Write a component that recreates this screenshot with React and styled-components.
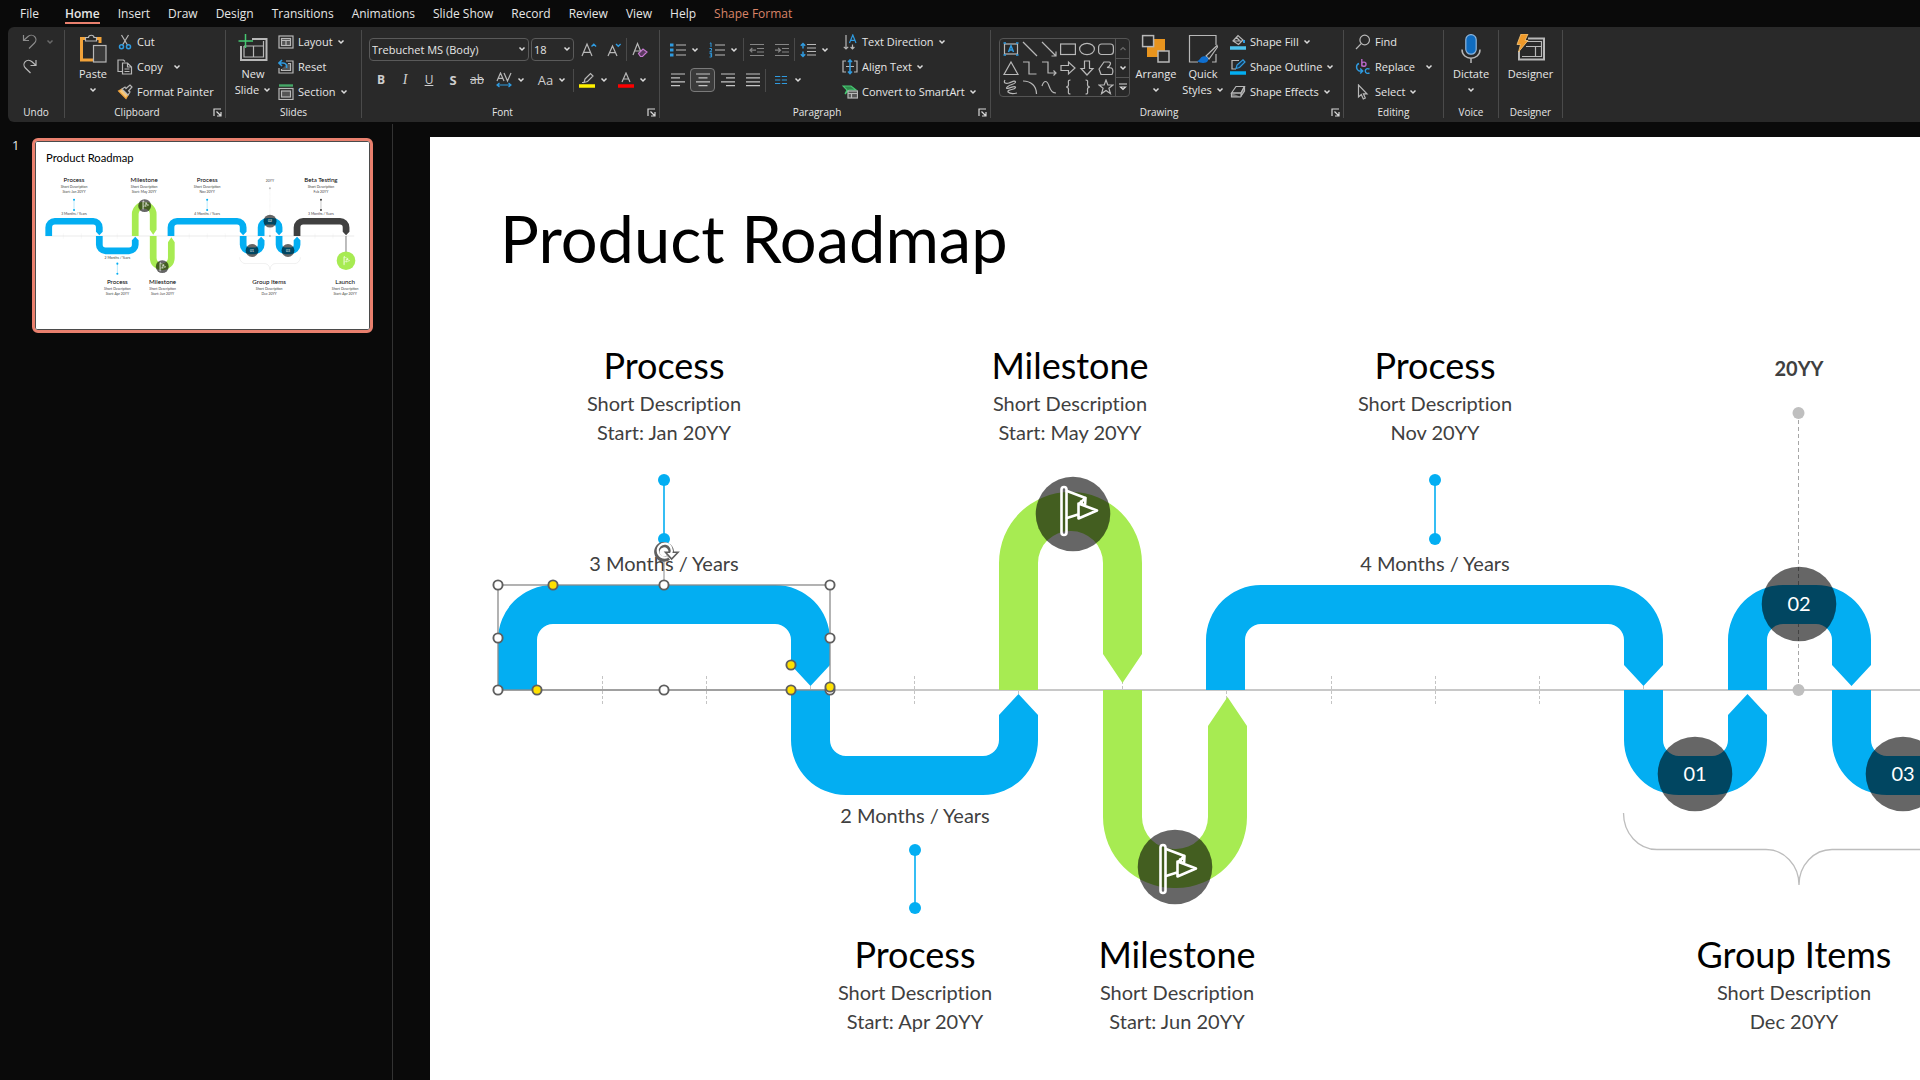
import React from "react";
import styled, { createGlobalStyle } from "styled-components";

const colors = {
  blue: "#03aef2",
  green: "#a7eb52",
  dark: "#404040",
  accent: "#e9806e",
  ink: "#b8b8b8",
  sky: "#2f9be0",
};

const SLIDE = { width: 1956, height: 1100, baseline: 553 };

const GlobalStyle = createGlobalStyle`
  * {
    box-sizing: border-box;
  }

  body {
    margin: 0;
    background: #0a0a0a;
    color: #e6e6e6;
    font-family: "Open Sans", "Noto Sans", sans-serif;
    font-size: 11px;
    overflow: hidden;
  }

  button,
  select {
    font: inherit;
    color: inherit;
    background: none;
    border: none;
    padding: 0;
    margin: 0;
  }
`;

const Page = styled.div`
  display: flex;
  flex-direction: column;
  height: 100vh;
`;

/* ---------- Menu ---------- */

const MenuBar = styled.nav`
  display: flex;
  gap: 18px;
  height: 27px;
  padding-left: 20px;

  a:first-child {
    margin-right: 8px;
  }
`;

const MenuLink = styled.a`
  height: 24px;
  line-height: 27px;
  font-size: 12px;
  text-decoration: none;
  white-space: nowrap;
  color: ${({ $accent }) => ($accent ? "#d98468" : "#e6e6e6")};
  font-weight: ${({ $active }) => ($active ? 600 : 400)};
  border-bottom: 2px solid ${({ $active }) => ($active ? colors.accent : "transparent")};
`;

/* ---------- Ribbon ---------- */

const Ribbon = styled.header`
  display: flex;
  height: 95px;
  flex: none;
  margin-left: 8px;
  padding-top: 3px;
  background: #292929;
  border-radius: 6px 0 0 6px;
`;

const Group = styled.section`
  display: flex;
  flex-direction: column;
  flex: none;
  width: ${({ $width }) => $width}px;
  height: 88px;
  border-right: 1px solid #4a4a4a;
`;

const GroupBody = styled.div`
  display: flex;
  height: 76px;
  padding-left: ${({ $pad }) => $pad || 0}px;
`;

const GroupFooter = styled.div`
  display: grid;
  grid-template-columns: ${({ $launcher }) => ($launcher ? "1fr 16px" : "1fr")};
  height: 12px;
  line-height: 12px;
  font-size: 10px;
  text-align: center;
`;

const Launcher = styled.button`
  display: flex;
  align-items: center;
  justify-content: center;
`;

const BigButton = styled.button`
  display: flex;
  flex-direction: column;
  align-items: center;
  width: ${({ $width }) => $width}px;
  padding-top: 4px;
  line-height: 16px;
  white-space: nowrap;

  > svg:first-child {
    margin-bottom: 2px;
  }
`;

const ButtonLine = styled.span`
  display: flex;
  align-items: center;
  justify-content: center;
  gap: 4px;
  height: 16px;
`;

const SmallColumn = styled.div`
  display: flex;
  flex-direction: column;
  align-items: flex-start;
  margin-left: ${({ $left }) => $left || 0}px;
`;

const SmallButton = styled.button`
  display: flex;
  align-items: center;
  gap: 4px;
  height: 25px;
  line-height: 14px;
  padding-bottom: 1px;
  white-space: nowrap;

  > span {
    margin-right: ${({ $wide }) => ($wide ? 6 : 0)}px;
  }
`;

const ToolRows = styled.div`
  display: flex;
  flex-direction: column;
  gap: 7px;
  padding-top: 8px;
`;

const ToolRow = styled.div`
  display: flex;
  align-items: center;
  height: ${({ $tall }) => ($tall ? 24 : 23)}px;
`;

const Tool = styled.button`
  display: flex;
  align-items: center;
  justify-content: center;
  gap: 5px;
  width: ${({ $width }) => $width || 25}px;
  height: 24px;
  border-radius: 4px;
  border: 1px solid ${({ $on }) => ($on ? "#7a7a7a" : "transparent")};
  background: ${({ $on }) => ($on ? "#3a3a3a" : "none")};
`;

const Glyph = styled.span`
  font-size: ${({ $size }) => $size || 12}px;
  line-height: 20px;
  color: #cfcfcf;
  font-weight: ${({ $bold }) => ($bold ? 700 : 400)};
  font-style: ${({ $italic }) => ($italic ? "italic" : "normal")};
  font-family: ${({ $serif }) => ($serif ? '"Liberation Serif", serif' : "inherit")};
  text-decoration: ${({ $line }) => $line || "none"};
`;

const Divider = styled.span`
  width: 1px;
  height: 23px;
  background: #4a4a4a;
`;

const SelectBox = styled.label`
  position: relative;
  width: ${({ $width }) => $width}px;
  height: 23px;
  margin-right: 2px;

  select {
    appearance: none;
    width: 100%;
    height: 23px;
    padding-left: 2px;
    border: 1px solid #5a5a5a;
    border-radius: 4px;
    outline: none;
  }

  svg {
    position: absolute;
    right: 3px;
    top: 8px;
    pointer-events: none;
  }
`;

const Gallery = styled.div`
  display: flex;
  height: 59px;
  margin-top: 8px;
  border: 1px solid #555;
  border-radius: 4px;
`;

const ShapeGrid = styled.div`
  display: grid;
  grid-template-columns: repeat(6, 19px);
  grid-template-rows: repeat(3, 19px);
  padding-left: 1px;

  button {
    display: flex;
    align-items: center;
    justify-content: center;
  }
`;

const GalleryScroll = styled.div`
  display: grid;
  grid-template-rows: repeat(3, 19px);
  width: 14px;
  border-left: 1px solid #555;

  button {
    display: flex;
    align-items: center;
    justify-content: center;
  }

  button + button {
    border-top: 1px solid #555;
  }
`;

/* ---------- Workspace ---------- */

const Workspace = styled.div`
  display: flex;
  flex: 1;
  min-height: 0;
  padding-top: 2px;
`;

const SlidePanel = styled.aside`
  display: flex;
  align-items: flex-start;
  flex: none;
  width: 393px;
  padding: 14px 0 0 12px;
  border-right: 1px solid #333;
`;

const SlideNumber = styled.span`
  width: 20px;
  font-size: 13px;
  line-height: 14px;
`;

const Thumbnail = styled.button`
  display: block;
  width: 341px;
  height: 195px;
  padding: 0;
  border: 3px solid ${colors.accent};
  border-radius: 6px;
  background: #fff;
  overflow: hidden;

  svg {
    display: block;
    width: 100%;
    height: 100%;
    outline: 1px solid #4b4b4b;
    outline-offset: -1px;
    border-radius: 2px;
  }
`;

const Stage = styled.main`
  flex: 1;
  min-width: 0;
  padding: 13px 0 0 37px;
  overflow: hidden;
`;

const SlideCanvas = styled.div`
  position: relative;
  width: ${SLIDE.width}px;
  height: ${SLIDE.height}px;
  background: #fff;
  color: #000;
  font-family: Lato, "Open Sans", sans-serif;
  font-variant-ligatures: none;

  > svg {
    display: block;
  }
`;

const SlideTitle = styled.h1`
  position: absolute;
  left: 70px;
  top: 62px;
  margin: 0;
  font-size: 65px;
  line-height: 78px;
  font-weight: 400;
  white-space: nowrap;
`;

const Label = styled.div`
  position: absolute;
  left: ${({ $x }) => $x - 150}px;
  top: ${({ $y }) => $y}px;
  width: 300px;
  text-align: center;
  font-size: 20px;
  line-height: 29px;
  color: ${({ $color }) => $color || colors.dark};
  font-weight: ${({ $bold }) => ($bold ? 700 : 400)};

  h2 {
    margin: 0;
    font-size: 36px;
    line-height: 48px;
    font-weight: 400;
    color: #000;
  }

  p {
    margin: 0;
  }
`;

const SelectionLayer = styled.svg`
  position: absolute;
  left: 0;
  top: 0;
`;

/* ---------- Roadmap data, in slide coordinates ---------- */

const bend = { ro: 55, ri: 16, shoulder: 25, tip: 4, h: 105 };
const loop = { ro: 71, ri: 32, shoulder: 36, tip: 7, h: 198 };

const bands = [
  { x: 68, w: 332, dir: 1, color: colors.blue, ...bend },
  { x: 361, w: 247, dir: -1, color: colors.blue, ...bend },
  { x: 569, w: 143, dir: 1, color: colors.green, ...loop },
  { x: 673, w: 144, dir: -1, color: colors.green, ...loop },
  { x: 776, w: 457, dir: 1, color: colors.blue, ...bend },
  { x: 1194, w: 143, dir: -1, color: colors.blue, ...bend },
  { x: 1298, w: 143, dir: 1, color: colors.blue, ...bend },
  { x: 1402, w: 143, dir: -1, color: colors.blue, ...bend },
  { x: 1506, w: 323, dir: 1, color: colors.dark, ...bend },
];

const connectors = [
  { x: 234, y1: 343, y2: 402, color: colors.blue },
  { x: 485, y1: 713, y2: 771, color: colors.blue },
  { x: 1005, y1: 343, y2: 402, color: colors.blue },
  { x: 1664, y1: 343, y2: 402, color: colors.dark },
];

const ticks = [172, 276, 380, 484, 588, 692, 796, 901, 1005, 1109, 1213, 1525, 1629, 1733];

// far: beyond the right edge of the zoomed-in slide, drawn in the overview only
const captions = [
  { x: 234, y: 204, title: "Process", lines: ["Short Description", "Start: Jan 20YY"] },
  { x: 640, y: 204, title: "Milestone", lines: ["Short Description", "Start: May 20YY"] },
  { x: 1005, y: 204, title: "Process", lines: ["Short Description", "Nov 20YY"] },
  { x: 1664, y: 204, title: "Beta Testing", lines: ["Short Description", "Feb 20YY"], far: true },
  { x: 485, y: 793, title: "Process", lines: ["Short Description", "Start: Apr 20YY"] },
  { x: 747, y: 793, title: "Milestone", lines: ["Short Description", "Start: Jun 20YY"] },
  { x: 1364, y: 793, title: "Group Items", lines: ["Short Description", "Dec 20YY"] },
  { x: 1804, y: 793, title: "Launch", lines: ["Short Description", "Start: Apr 20YY"], far: true },
];

const notes = [
  { x: 234, y: 412, text: "3 Months / Years" },
  { x: 485, y: 664, text: "2 Months / Years" },
  { x: 1005, y: 412, text: "4 Months / Years" },
  { x: 1664, y: 412, text: "3 Months / Years", far: true },
  { x: 1369, y: 217, text: "20YY", bold: true },
  { x: 1265, y: 622, text: "01", color: "#fff" },
  { x: 1369, y: 452, text: "02", color: "#fff" },
  { x: 1473, y: 622, text: "03", color: "#fff" },
];

const badges = [
  [643, 377],
  [745, 730],
  [1265, 637],
  [1369, 467],
  [1473, 637],
];

const bandPath = ({ x, w, h, dir, ro, ri, shoulder, tip }) => {
  const t = 39;
  const base = SLIDE.baseline;
  const y = (d) => base - dir * d;
  const out = dir === 1 ? 1 : 0;
  const inn = 1 - out;
  const r = x + w;
  return [
    `M${x} ${base}V${y(h - ro)}`,
    `A${ro} ${ro} 0 0 ${out} ${x + ro} ${y(h)}H${r - ro}`,
    `A${ro} ${ro} 0 0 ${out} ${r} ${y(h - ro)}V${y(shoulder)}`,
    `L${r - t / 2} ${y(tip)}L${r - t} ${y(shoulder)}V${y(h - t - ri)}`,
    `A${ri} ${ri} 0 0 ${inn} ${r - t - ri} ${y(h - t)}H${x + t + ri}`,
    `A${ri} ${ri} 0 0 ${inn} ${x + t} ${y(h - t - ri)}V${base}Z`,
  ].join("");
};

const Flag = ({ x, y }) => (
  <g
    transform={`translate(${x} ${y})`}
    fill="none"
    stroke="#fff"
    strokeWidth="2.6"
    strokeLinejoin="round"
    strokeLinecap="round"
  >
    <rect x="-11.5" y="-27" width="5" height="48" rx="2.5" />
    <path d="M-6-23L12.5-16L12-8M-6 4L5 0.5M12.5-16L6-10M5.5-10.5L24-3.5L5.5 4.5ZM8-12.5L10-9" />
  </g>
);

const RoadmapArt = () => (
  <>
    <path d="M68 553H1857" stroke="#c8c8c8" strokeWidth="2" />
    {ticks.map((x) => (
      <path key={x} d={`M${x + 0.5} 539V567`} stroke="#c4c4c4" strokeDasharray="3 2" />
    ))}
    <path d="M1368.5 276V553" stroke="#a6a6a6" strokeDasharray="4 3" />
    {bands.map((band) => (
      <path key={band.x} d={bandPath(band)} fill={band.color} />
    ))}
    <circle cx="1368.5" cy="276" r="6" fill="#bfbfbf" />
    <circle cx="1368.5" cy="553" r="6" fill="#bfbfbf" />
    {connectors.map(({ x, y1, y2, color }) => (
      <g key={x} fill={color}>
        <path d={`M${x} ${y1}V${y2}`} stroke={color} strokeWidth="1.6" />
        <circle cx={x} cy={y1} r="6" />
        <circle cx={x} cy={y2} r="6" />
      </g>
    ))}
    {badges.map(([x, y]) => (
      <circle key={x} cx={x} cy={y} r="37.3" fill="#000" fillOpacity="0.6" />
    ))}
    <Flag x={643} y={377} />
    <Flag x={742} y={735} />
    <path
      d="M1193.5 676C1193.5 696 1208 712.5 1227 712.5H1336C1354 712.5 1369 728 1369 748C1369 728 1384 712.5 1402 712.5H1511C1530 712.5 1544.5 696 1544.5 676"
      fill="none"
      stroke="#bdbdbd"
      strokeWidth="1.3"
    />
    <path d="M1809 553V650" stroke={colors.dark} strokeWidth="4" />
    <circle cx="1809" cy="696" r="54" fill={colors.green} />
    <Flag x={1807} y={699} />
  </>
);

const handles = [
  [68, 448], [234, 448], [400, 448], [68, 501], [400, 501], [68, 553], [234, 553], [400, 553],
];
const yellowHandles = [[123, 448], [107, 553], [361, 528], [361, 553], [400, 550]];

const Selection = () => (
  <g stroke="#5f5f5f">
    <rect x="68" y="448" width="332" height="105" fill="none" stroke="#8a8a8a" strokeWidth="1.3" />
    <path d="M234 424V448" stroke="#8a8a8a" />
    <g strokeWidth="1.9">
      {handles.map(([x, y]) => (
        <circle key={`${x}-${y}`} cx={x} cy={y} r="4.6" fill="#fff" />
      ))}
      {yellowHandles.map(([x, y]) => (
        <circle key={`${x}-${y}`} cx={x} cy={y} r="4.6" fill="#ffe100" />
      ))}
    </g>
    <path d="M238.4 420.6A7.2 7.2 0 1 1 241.2 415.6" fill="none" strokeWidth="5.4" />
    <path d="M235.5 415.3H248L241.6 422Z" fill="#fff" strokeWidth="1.6" />
    <path d="M237.6 420A7 7 0 1 1 241 416.8" fill="none" stroke="#fff" strokeWidth="2.2" />
  </g>
);

const MainSlide = () => (
  <SlideCanvas>
    <svg width={SLIDE.width} height={SLIDE.height} aria-hidden="true">
      <RoadmapArt />
    </svg>
    <SlideTitle>Product Roadmap</SlideTitle>
    {captions.filter(({ far }) => !far).map(({ x, y, title, lines }) => (
      <Label key={title + x} $x={x} $y={y}>
        <h2>{title}</h2>
        {lines.map((line) => (
          <p key={line}>{line}</p>
        ))}
      </Label>
    ))}
    {notes.filter(({ far }) => !far).map(({ x, y, text, bold, color }) => (
      <Label key={text + x} $x={x} $y={y} $bold={bold} $color={color}>
        {text}
      </Label>
    ))}
    <SelectionLayer width="460" height="600" aria-hidden="true">
      <Selection />
    </SelectionLayer>
  </SlideCanvas>
);

const ThumbSlide = () => (
  <svg viewBox="8 4 1940 1092" fontFamily="Lato, sans-serif" fontSize="20">
    <RoadmapArt />
    <text x="72" y="126" fontSize="65">
      Product Roadmap
    </text>
    {captions.map(({ x, y, title, lines }) => (
      <g key={title + x} textAnchor="middle">
        <text x={x} y={y + 37} fontSize="36">
          {title}
        </text>
        {lines.map((line, i) => (
          <text key={line} x={x} y={y + 70 + i * 29} fill={colors.dark}>
            {line}
          </text>
        ))}
      </g>
    ))}
    {notes.map(({ x, y, text, color }) => (
      <text key={text + x} x={x} y={y + 21} textAnchor="middle" fill={color || colors.dark}>
        {text}
      </text>
    ))}
  </svg>
);

/* ---------- Icons ---------- */

const Icon = ({ size = 16, color = colors.ink, children }) => (
  <svg
    width={size}
    height={size}
    viewBox={`0 0 ${size} ${size}`}
    fill="none"
    stroke={color}
    strokeWidth="1.2"
    aria-hidden="true"
  >
    {children}
  </svg>
);

const Chevron = ({ color = "#dcdcdc" }) => (
  <svg width="8" height="6" viewBox="0 0 8 6" fill="none" stroke={color} strokeWidth="1.5" aria-hidden="true">
    <path d="M1.5 1.5L4 4L6.5 1.5" />
  </svg>
);

const LauncherIcon = () => (
  <svg width="9" height="9" viewBox="0 0 9 9" fill="none" stroke="#d8d8d8" strokeWidth="1.2" aria-hidden="true">
    <path d="M1 8V1H8M3.5 3.5L7.5 7.5M8 4V8H4" />
  </svg>
);

const UndoIcon = () => (
  <Icon color="#8c8c8c">
    <path d="M1.5 1V6.5H7M1.5 6.5L6 2.5C8 .8 11 .8 12.7 2.6C14.4 4.4 14.3 7.2 12.5 9L7 14.5" />
  </Icon>
);

const RedoIcon = () => (
  <Icon>
    <path d="M14 1V6.5H8.5M14 6.5L10 2.7C8 .8 5 .8 3.2 2.6C1.5 4.4 1.6 7.2 3.4 9L8.5 14" />
  </Icon>
);

const PasteIcon = () => (
  <Icon size={30}>
    <path d="M9 4.5H3.5V26H15M19 4.5H22V9" stroke="#f2a33a" strokeWidth="3" />
    <path d="M7.5 7V3.5H10.5C10.5 .5 16 .5 16 3.5H18.5V7Z" fill="#292929" />
    <rect x="15.5" y="11.5" width="12.5" height="16.5" fill="#3a3a3a" />
  </Icon>
);

const CutIcon = () => (
  <Icon>
    <path d="M4.5 1L10.5 11M11.5 1L5.5 11" />
    <circle cx="4.5" cy="12.7" r="2" stroke={colors.sky} strokeWidth="1.5" />
    <circle cx="11.5" cy="12.7" r="2" stroke={colors.sky} strokeWidth="1.5" />
  </Icon>
);

const CopyIcon = () => (
  <Icon>
    <path d="M5.5 12.5H1V1H6.5L8 2.5M5.5 4H10.5L14.5 8V15H5.5ZM10.5 4V8H14.5M7.5 10H12.5M7.5 12.5H12.5" />
  </Icon>
);

const PainterIcon = () => (
  <Icon>
    <path d="M1.5 7L6 4.5L11.5 10L9 14.5Z" fill="#f6c87c" stroke="#f2a33a" />
    <path d="M5 5L8 3L9 4.5L13 1L15 3L11.5 7L13 8L11 11Z" fill="#292929" />
  </Icon>
);

const NewSlideIcon = () => (
  <Icon size={30}>
    <path d="M14 5H28.5V26H3V12" strokeWidth="2" />
    <path d="M6 12H25.5M15.5 12V23M6 12V23H25.5V7" strokeWidth="1.2" />
    <path d="M7.5 0V14M.5 7H15" stroke="#46c872" strokeWidth="1.5" />
  </Icon>
);

const LayoutIcon = () => (
  <Icon>
    <rect x="1" y="2" width="14" height="12" />
    <rect x="3.5" y="4.5" width="9" height="7" fill="#555" />
    <path d="M3.5 6.5H12.5M8 6.5V11.5" />
  </Icon>
);

const ResetIcon = () => (
  <Icon>
    <path d="M8 2H15V14H1V9" />
    <path d="M10 4.5H12.5V11.5H3.5V10" fill="#555" />
    <path d="M4 1L1 4L4 7M1 4H5C8 4 9 6 8.5 9" stroke={colors.sky} strokeWidth="1.6" />
  </Icon>
);

const SectionIcon = () => (
  <Icon>
    <path d="M1 1.5H15" stroke="#46a868" strokeWidth="2.4" />
    <rect x="1" y="4.5" width="14" height="11" />
    <rect x="3.5" y="7" width="9" height="6" fill="#555" />
  </Icon>
);

const GrowIcon = ({ small }) => (
  <Icon>
    <path d={small ? "M2 14L6.5 4L11 14M3.6 10.6H9.4" : "M1 14L6 2L11 14M2.8 10.3H9.2"} />
    <path d={small ? "M10 2L12.3 4.3L14.6 2" : "M10.5 4.5L12.8 2.2L15.1 4.5"} stroke={colors.sky} strokeWidth="1.4" />
  </Icon>
);

const ClearIcon = () => (
  <Icon>
    <path d="M1 13L5.5 1.5L9 10M2.6 9H8" />
    <path d="M6.5 11.5L11 7L15 10L10.5 14.5H8.5Z" stroke="#c678d0" fill="#5b3a60" />
  </Icon>
);

const SpacingIcon = () => (
  <Icon>
    <path d="M1 9L4.5 1L8 9M2.2 6.3H6.8M8 1L11.5 9L15 1" />
    <path d="M1 13H15M3.5 11L1 13L3.5 15M12.5 11L15 13L12.5 15" stroke={colors.sky} />
  </Icon>
);

const HighlighterIcon = () => (
  <Icon>
    <path d="M6 7L11.5 1.5L14 4L8.5 9.5L5 10.5ZM3 10.5H5" />
    <path d="M0 14H16" stroke="#fff100" strokeWidth="3.5" />
  </Icon>
);

const FontColorIcon = () => (
  <Icon>
    <path d="M4 10L8 1L12 10M5.4 7H10.6" />
    <path d="M0 14H16" stroke="#f00" strokeWidth="3.5" />
  </Icon>
);

const BulletsIcon = () => (
  <Icon>
    <path d="M6 3H16M6 8H16M6 13H16" />
    <path d="M0 3H3.5M0 8H3.5M0 13H3.5" stroke={colors.sky} strokeWidth="3.2" />
  </Icon>
);

const NumbersIcon = () => (
  <Icon>
    <path d="M6 3H16M6 8H16M6 13H16" />
    <path d="M.8 1.5L2 .8V5M.5 6.5H2.5V8.3L.7 9.8H3M.5 11.3H2.6V15H.5M1 13H2.6" stroke={colors.sky} strokeWidth="1" />
  </Icon>
);

const IndentIcon = ({ out }) => (
  <Icon color="#858585">
    <path d="M1 2.5H15M8 6.5H15M8 10H15M1 13.5H15" />
    <path d={out ? "M7 8.2H1M3.3 6L1 8.2L3.3 10.4" : "M1 8.2H6.5M4.2 6L6.5 8.2L4.2 10.4"} />
  </Icon>
);

const LineSpacingIcon = () => (
  <Icon>
    <path d="M7 2.5H16M7 6H16M7 9.5H16M7 13H16" />
    <path d="M3 1.5V6.5M3 9.5V14.5M.8 3.8L3 1.5L5.2 3.8M.8 12.2L3 14.5L5.2 12.2" stroke={colors.sky} strokeWidth="1.5" />
  </Icon>
);

const alignLines = {
  left: "M1 2H15M1 5.9H10M1 9.8H15M1 13.7H10",
  center: "M1 2H15M3.5 5.9H12.5M1 9.8H15M3.5 13.7H12.5",
  right: "M1 2H15M6 5.9H15M1 9.8H15M6 13.7H15",
  justify: "M1 2H15M1 5.9H15M1 9.8H15M1 13.7H15",
};

const AlignIcon = ({ kind }) => (
  <Icon color="#c4c4c4">
    <path d={alignLines[kind]} />
  </Icon>
);

const ColumnsIcon = () => (
  <Icon color={colors.sky}>
    <path d="M2 4.5H7.3M2 8H7.3M2 11.5H7.3M8.8 4.5H14M8.8 8H14M8.8 11.5H14" />
  </Icon>
);

const TextDirectionIcon = () => (
  <Icon>
    <path d="M4 1V15M1.8 12.8L4 15L6.2 12.8M10.5 10.5V15M8.6 13L10.5 15L12.4 13" />
    <path d="M7.5 9L10.8 1L14 9M8.5 6.3H13" stroke={colors.sky} />
  </Icon>
);

const AlignTextIcon = () => (
  <Icon>
    <path d="M4 2H1V13H4M12 2H15V13H12M4 7.5H12" />
    <path d="M8 1V14.5M6 3L8 1L10 3M6 12.5L8 14.5L10 12.5" stroke={colors.sky} strokeWidth="1.6" />
  </Icon>
);

const SmartArtIcon = () => (
  <Icon>
    <path d="M1 2H9L14 6H7L3 10L5 6Z" fill="#2f8a4c" stroke="#46c872" />
    <rect x="6" y="7" width="9.5" height="7" fill="#555" />
    <path d="M6 9.5H15.5M9.5 9.5V14" />
  </Icon>
);

const ArrangeIcon = () => (
  <Icon size={30}>
    <rect x="6" y="5" width="18" height="18" fill="#e8941e" stroke="none" />
    <rect x="1.6" y="1.6" width="11" height="11" fill="#292929" strokeWidth="1.5" />
    <rect x="17" y="17" width="11" height="11" fill="#292929" strokeWidth="1.5" />
  </Icon>
);

const QuickStylesIcon = () => (
  <Icon size={30}>
    <path d="M10 28H1.5V1.5H28V11M28 20V28H24" />
    <path d="M29 11.5L18 22L21 25L29.5 13Z" fill="#292929" />
    <path d="M9 27C12 27 12 22.5 16 22.3C19 22.2 21 24.5 20 26.5C18.5 30 12 29.5 9 27Z" fill="#0f6fd0" stroke="none" />
  </Icon>
);

const FillIcon = () => (
  <Icon>
    <path d="M3 7L8 1.5L13 6L8.5 10.5ZM6 3L9.5 6.5M3 7H12" />
    <path d="M14 6V9" stroke={colors.sky} strokeWidth="2" />
    <path d="M0 14H16" stroke="#4fc3ee" strokeWidth="3.5" />
  </Icon>
);

const OutlineIcon = () => (
  <Icon>
    <path d="M9 1.5H2V10H6" />
    <path d="M6 9.5L7 6L13 .8L15 3L9.5 8.5Z" stroke={colors.sky} fill="#123a58" />
    <path d="M0 14H16" stroke={colors.blue} strokeWidth="3.5" />
  </Icon>
);

const EffectsIcon = () => (
  <Icon>
    <path d="M1.5 9L6 2.5H14.5L11 9Z" />
    <path d="M1.5 9V13H10.5L14.5 7V2.5L11 9V13M1.5 9H11" fill="#777" />
  </Icon>
);

const FindIcon = () => (
  <Icon>
    <circle cx="9.7" cy="6" r="4.8" />
    <path d="M6.2 9.6L1 15" />
  </Icon>
);

const ReplaceIcon = () => (
  <Icon>
    <path d="M6.8 0V7.5M6.8 5.2C6.8 2.4 11 2.4 11 5.2C11 8 6.8 8 6.8 5.2" stroke="#b866c8" strokeWidth="1.4" />
    <path d="M14.5 10.2C12.5 9 10.3 10 10.3 12C10.3 14 12.5 15 14.5 13.8M4 4.5C1 5.5 .5 10 4 12H7.5M5.2 9.5L7.7 12L5.2 14.5" stroke={colors.sky} strokeWidth="1.4" />
  </Icon>
);

const CursorIcon = () => (
  <Icon>
    <path d="M3.5 1V13L6.3 10.5L8.3 15L10.3 14L8.4 9.8H12Z" />
  </Icon>
);

const MicIcon = () => (
  <Icon size={30}>
    <rect x="9.8" y=".7" width="10.4" height="19.5" rx="5" fill="#0f6cc0" stroke="#8fb6dc" />
    <path d="M6 15.5C6 27 24 27 24 15.5M15 24V29" strokeWidth="1.5" />
  </Icon>
);

const DesignerIcon = () => (
  <Icon size={30}>
    <path d="M12 4.5H28V25.5H3V17" strokeWidth="2" />
    <path d="M10 7.5H25.5V22.5H6M10 12.5H25.5M19.5 12.5V22.5" />
    <path d="M5 0H12L9 6.5H12L2.5 18L4.5 10.5H1Z" fill="#f09a2a" stroke="#f6c87c" strokeWidth=".8" />
  </Icon>
);

const shapes = [
  ["Text box", <><rect x="1.5" y="3" width="13" height="10" /><path d="M5.5 11L8 4.8L10.5 11M6.3 9H9.7M.5 2H3M13 2H15.5M.5 14H3M13 14H15.5" stroke={colors.sky} strokeWidth="1.5" /></>],
  ["Line", <path d="M1 1L15 15" />],
  ["Arrow", <path d="M1 1L15 15M15 10.5V15H10.5" />],
  ["Rectangle", <rect x=".6" y="3" width="14.8" height="10.5" />],
  ["Oval", <ellipse cx="8" cy="8" rx="7.4" ry="5.6" />],
  ["Rounded rectangle", <rect x=".6" y="3" width="14.8" height="10.5" rx="3" />],
  ["Triangle", <path d="M8 2L15 14.5H1Z" />],
  ["Elbow", <path d="M1 2H7V14H14.5" />],
  ["Elbow arrow", <path d="M1 2H7V13H15M12.5 10.5L15 13L12.5 15.5" />],
  ["Right arrow", <path d="M1 5.5H8.5V2L15 8L8.5 14V10.5H1Z" />],
  ["Down arrow", <path d="M5.5 1H10.5V8.5H14L8 15L2 8.5H5.5Z" />],
  ["Freeform", <path d="M3 14.5L1 9L6 2H11C14 2 12 7 9 7.5L13.5 8C15.5 9 15 13 14 14.5Z" />],
  ["Scribble", <path d="M2 1C0 4 3 5 6 4C9 3 12 1 12.5 3C13 5 4 6 3.5 9C4 11 11 6 12.5 8C13 11 4 10 5 13C7 15 10 15 14 14" />],
  ["Arc", <path d="M1 2C9 2 14.5 7 14.5 15" />],
  ["Curve", <path d="M1 7C3 1 6 1 8 7C10 13 12 14 15 14" />],
  ["Left brace", <path d="M10.5 1C7.5 1 8.5 3 8.5 5.5C8.5 7.2 8 8 6 8C8 8 8.5 8.8 8.5 10.5C8.5 13 7.5 15 10.5 15" />],
  ["Right brace", <path d="M6.5 1C9.5 1 8.5 3 8.5 5.5C8.5 7.2 9 8 11 8C9 8 8.5 8.8 8.5 10.5C8.5 13 9.5 15 6.5 15" />],
  ["Star", <path d="M8 1L9.8 6H15L10.9 9.2L12.4 14.6L8 11.4L3.6 14.6L5.1 9.2L1 6H6.2Z" />],
];

/* ---------- Ribbon parts ---------- */

const menuItems = [
  "File", "Home", "Insert", "Draw", "Design", "Transitions", "Animations",
  "Slide Show", "Record", "Review", "View", "Help", "Shape Format",
];

const RibbonGroup = ({ name, width, pad, launcher, children }) => (
  <Group $width={width} aria-label={name}>
    <GroupBody $pad={pad}>{children}</GroupBody>
    <GroupFooter $launcher={launcher}>
      <span>{name}</span>
      {launcher && (
        <Launcher aria-label={`${name} options`}>
          <LauncherIcon />
        </Launcher>
      )}
    </GroupFooter>
  </Group>
);

const Small = ({ icon, label, menu, wide }) => (
  <SmallButton $wide={wide}>
    {icon}
    <span>{label}</span>
    {menu && <Chevron />}
  </SmallButton>
);

const Big = ({ icon, lines, menu, width }) => (
  <BigButton $width={width}>
    {icon}
    {lines.map((line, i) => (
      <ButtonLine key={line}>
        {line}
        {lines.length > 1 && i === lines.length - 1 && <Chevron />}
      </ButtonLine>
    ))}
    {menu && (
      <ButtonLine>
        <Chevron />
      </ButtonLine>
    )}
  </BigButton>
);

const App = () => (
  <Page>
    <GlobalStyle />
    <MenuBar>
      {menuItems.map((item) => (
        <MenuLink key={item} href="#" $active={item === "Home"} $accent={item === "Shape Format"}>
          {item}
        </MenuLink>
      ))}
    </MenuBar>

    <Ribbon>
      <RibbonGroup name="Undo" width={57}>
        <SmallColumn $left={14}>
          <SmallButton aria-label="Undo">
            <UndoIcon />
            <span />
            <Chevron color="#6a6a6a" />
          </SmallButton>
          <SmallButton aria-label="Redo">
            <RedoIcon />
          </SmallButton>
        </SmallColumn>
      </RibbonGroup>

      <RibbonGroup name="Clipboard" width={161} launcher pad={6}>
        <Big icon={<PasteIcon />} lines={["Paste"]} menu width={44} />
        <SmallColumn $left={2}>
          <Small icon={<CutIcon />} label="Cut" />
          <Small icon={<CopyIcon />} label="Copy" menu wide />
          <Small icon={<PainterIcon />} label="Format Painter" />
        </SmallColumn>
      </RibbonGroup>

      <RibbonGroup name="Slides" width={136} pad={6}>
        <Big icon={<NewSlideIcon />} lines={["New", "Slide"]} width={42} />
        <SmallColumn $left={4}>
          <Small icon={<LayoutIcon />} label="Layout" menu />
          <Small icon={<ResetIcon />} label="Reset" />
          <Small icon={<SectionIcon />} label="Section" menu />
        </SmallColumn>
      </RibbonGroup>

      <RibbonGroup name="Font" width={298} pad={7} launcher>
        <ToolRows>
          <ToolRow>
            <SelectBox $width={160}>
              <select aria-label="Font" defaultValue="Trebuchet MS (Body)">
                <option>Trebuchet MS (Body)</option>
              </select>
              <Chevron />
            </SelectBox>
            <SelectBox $width={43}>
              <select aria-label="Font size" defaultValue="18">
                <option>18</option>
              </select>
              <Chevron />
            </SelectBox>
            <Tool aria-label="Grow font"><GrowIcon /></Tool>
            <Tool aria-label="Shrink font"><GrowIcon small /></Tool>
            <Divider />
            <Tool aria-label="Clear formatting"><ClearIcon /></Tool>
          </ToolRow>
          <ToolRow $tall>
            <Tool $width={24}><Glyph $bold>B</Glyph></Tool>
            <Tool $width={24}><Glyph $italic $serif $size={14}>I</Glyph></Tool>
            <Tool $width={24}><Glyph $line="underline">U</Glyph></Tool>
            <Tool $width={24}><Glyph $bold $size={13}>S</Glyph></Tool>
            <Tool $width={24}><Glyph $line="line-through">ab</Glyph></Tool>
            <Tool $width={42} aria-label="Character spacing"><SpacingIcon /><Chevron /></Tool>
            <Tool $width={42}><Glyph $size={13}>Aa</Glyph><Chevron /></Tool>
            <Divider />
            <Tool $width={39} aria-label="Highlight"><HighlighterIcon /><Chevron /></Tool>
            <Tool $width={39} aria-label="Font colour"><FontColorIcon /><Chevron /></Tool>
          </ToolRow>
        </ToolRows>
      </RibbonGroup>

      <RibbonGroup name="Paragraph" width={331} pad={5} launcher>
        <ToolRows>
          <ToolRow>
            <Tool $width={39} aria-label="Bullets"><BulletsIcon /><Chevron /></Tool>
            <Tool $width={39} aria-label="Numbering"><NumbersIcon /><Chevron /></Tool>
            <Divider />
            <Tool aria-label="Decrease indent"><IndentIcon out /></Tool>
            <Tool aria-label="Increase indent"><IndentIcon /></Tool>
            <Divider />
            <Tool $width={39} aria-label="Line spacing"><LineSpacingIcon /><Chevron /></Tool>
          </ToolRow>
          <ToolRow $tall>
            <Tool aria-label="Align left"><AlignIcon kind="left" /></Tool>
            <Tool aria-label="Center" $on><AlignIcon kind="center" /></Tool>
            <Tool aria-label="Align right"><AlignIcon kind="right" /></Tool>
            <Tool aria-label="Justify"><AlignIcon kind="justify" /></Tool>
            <Divider />
            <Tool $width={42} aria-label="Columns"><ColumnsIcon /><Chevron /></Tool>
          </ToolRow>
        </ToolRows>
        <SmallColumn $left={8}>
          <Small icon={<TextDirectionIcon />} label="Text Direction" menu />
          <Small icon={<AlignTextIcon />} label="Align Text" menu />
          <Small icon={<SmartArtIcon />} label="Convert to SmartArt" menu />
        </SmallColumn>
      </RibbonGroup>

      <RibbonGroup name="Drawing" width={353} pad={8} launcher>
        <Gallery>
          <ShapeGrid>
            {shapes.map(([name, art]) => (
              <button key={name} aria-label={name}>
                <Icon>{art}</Icon>
              </button>
            ))}
          </ShapeGrid>
          <GalleryScroll>
            <button aria-label="Previous shapes">
              <Icon size={8} color="#6a6a6a"><path d="M1.5 5L4 2.5L6.5 5" /></Icon>
            </button>
            <button aria-label="Next shapes"><Chevron /></button>
            <button aria-label="All shapes">
              <Icon size={8} color="#dcdcdc"><path d="M0 1H8M1.5 4L4 6.5L6.5 4Z" /></Icon>
            </button>
          </GalleryScroll>
        </Gallery>
        <Big icon={<ArrangeIcon />} lines={["Arrange"]} menu width={52} />
        <Big icon={<QuickStylesIcon />} lines={["Quick", "Styles"]} width={42} />
        <SmallColumn $left={6}>
          <Small icon={<FillIcon />} label="Shape Fill" menu />
          <Small icon={<OutlineIcon />} label="Shape Outline" menu />
          <Small icon={<EffectsIcon />} label="Shape Effects" menu />
        </SmallColumn>
      </RibbonGroup>

      <RibbonGroup name="Editing" width={100} pad={11}>
        <SmallColumn>
          <Small icon={<FindIcon />} label="Find" />
          <Small icon={<ReplaceIcon />} label="Replace" menu wide />
          <Small icon={<CursorIcon />} label="Select" menu />
        </SmallColumn>
      </RibbonGroup>

      <RibbonGroup name="Voice" width={55}>
        <Big icon={<MicIcon />} lines={["Dictate"]} menu width={54} />
      </RibbonGroup>

      <RibbonGroup name="Designer" width={64}>
        <Big icon={<DesignerIcon />} lines={["Designer"]} width={63} />
      </RibbonGroup>
    </Ribbon>

    <Workspace>
      <SlidePanel>
        <SlideNumber>1</SlideNumber>
        <Thumbnail aria-label="Slide 1">
          <ThumbSlide />
        </Thumbnail>
      </SlidePanel>
      <Stage>
        <MainSlide />
      </Stage>
    </Workspace>
  </Page>
);

export default App;
